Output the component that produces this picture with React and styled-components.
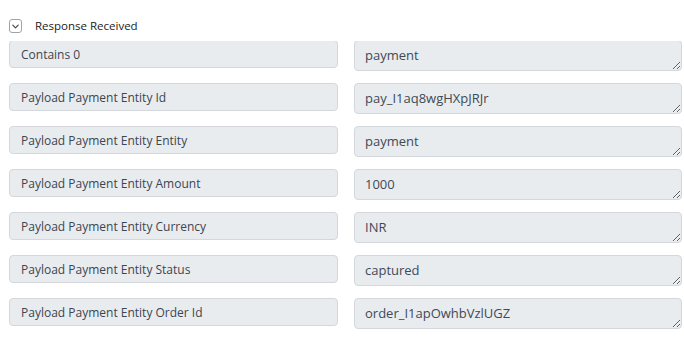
import styled, { createGlobalStyle } from "styled-components";
import { useEffect, useRef } from "react";

const GlobalStyle = createGlobalStyle`
  html, body {
    margin: 0;
    padding: 0;
    background: #ffffff;
    font-family: "Open Sans", Lato, sans-serif;
  }
`;

const fields = [
  { label: "Contains 0", value: "payment" },
  { label: "Payload Payment Entity Id", value: "pay_I1aq8wgHXpJRJr" },
  { label: "Payload Payment Entity Entity", value: "payment" },
  { label: "Payload Payment Entity Amount", value: "1000" },
  { label: "Payload Payment Entity Currency", value: "INR" },
  { label: "Payload Payment Entity Status", value: "captured" },
  { label: "Payload Payment Entity Order Id", value: "order_I1apOwhbVzlUGZ" },
];

const Panel = styled.div`
  width: 684px;
  height: 338px;
  display: flex;
  flex-direction: column;
`;

const Header = styled.div`
  height: 41px;
  display: flex;
  align-items: center;
  gap: 13px;
  padding: 9px 0 0 9px;
  box-sizing: border-box;
  font-size: 11.5px;
  color: #222;
`;

const Toggle = styled.span`
  width: 13px;
  height: 14px;
  margin-top: 2px;
  box-sizing: border-box;
  border: 1px solid #9ea3a8;
  border-radius: 3px;
  display: flex;
  align-items: center;
  justify-content: center;
  background: #fff;
`;

const Scroller = styled.div`
  flex: 1;
  overflow: hidden;
`;

const Grid = styled.div`
  display: grid;
  grid-template-columns: 329px 328px;
  column-gap: 16px;
  row-gap: 12px;
  align-items: start;
  padding: 0 2px 20px 9px;
`;

const LabelBox = styled.input`
  height: 28px;
  box-sizing: border-box;
  width: 100%;
  margin: 0;
  border: 1px solid #d4d8dc;
  border-radius: 4px;
  background: #e9ecef;
  padding: 0 11px;
  font-family: "Open Sans", Lato, sans-serif;
  font-size: 12px;
  color: #3c4550;
  outline: none;
`;

const ValueBox = styled.textarea`
  display: block;
  height: 31px;
  box-sizing: border-box;
  width: 100%;
  margin: 0;
  border: 1px solid #d4d8dc;
  border-radius: 4px;
  background: #e9ecef;
  padding: 5px 10px;
  font-family: "Open Sans", Lato, sans-serif;
  font-size: 13px;
  line-height: 18px;
  color: #3d4a57;
  resize: vertical;
  outline: none;
  overflow: hidden;
`;

export default function App() {
  const ref = useRef(null);
  useEffect(() => {
    if (ref.current) ref.current.scrollTop = 1;
  }, []);

  return (
    <>
      <GlobalStyle />
      <Panel>
        <Header>
          <Toggle>
            <svg width="9" height="9" viewBox="0 0 10 10" fill="none">
              <path d="M2 3.5 L5 6.5 L8 3.5" stroke="#444" strokeWidth="1.3" strokeLinecap="round" strokeLinejoin="round" />
            </svg>
          </Toggle>
          <span>Response Received</span>
        </Header>
        <Scroller ref={ref}>
          <Grid>
            {fields.map((f) => (
              <>
                <LabelBox key={f.label} readOnly value={f.label} />
                <ValueBox key={f.label + "v"} readOnly value={f.value} />
              </>
            ))}
          </Grid>
        </Scroller>
      </Panel>
    </>
  );
}
